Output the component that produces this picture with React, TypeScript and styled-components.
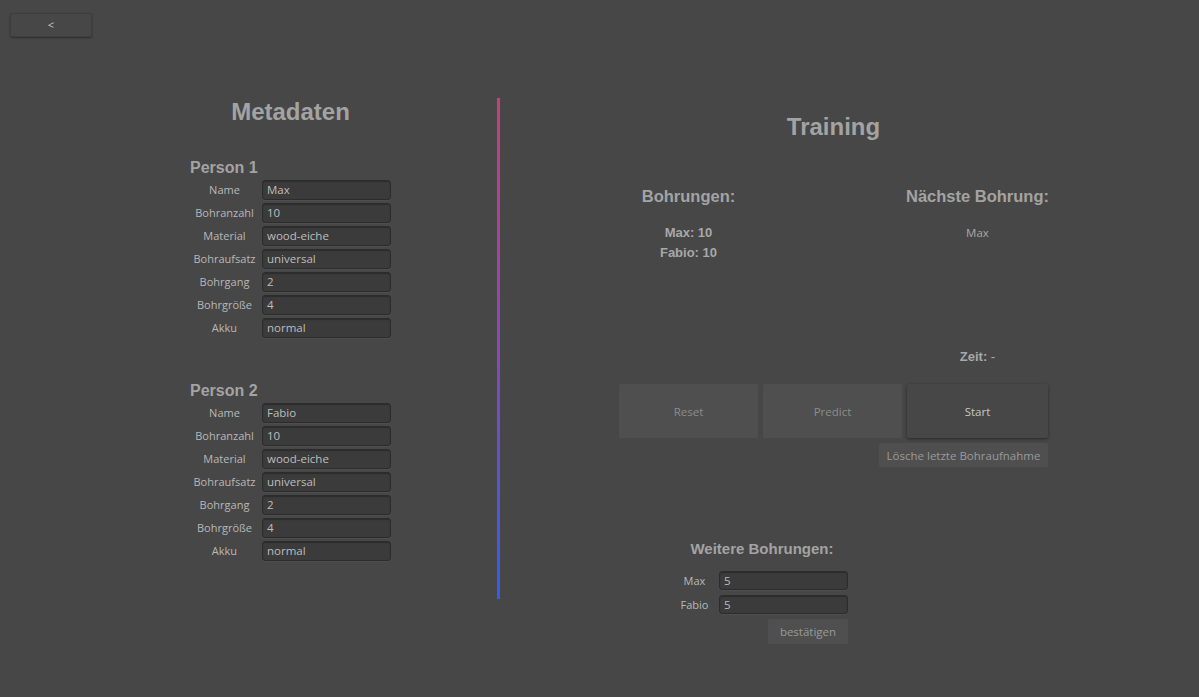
import React from "react";
import styled, { createGlobalStyle } from "styled-components";

const Global = createGlobalStyle`
  html, body { margin: 0; padding: 0; background: #474747; }
  body { font-family: "Open Sans", "Noto Sans", sans-serif; }
`;

const Page = styled.div`
  width: 1199px;
  height: 697px;
  background: #474747;
  position: relative;
  overflow: hidden;
`;

const TopBar = styled.div`
  padding: 12px 0 0 10px;
  height: 24px;
`;

const BackButton = styled.button`
  width: 82px;
  height: 24px;
  background: #474747;
  border: 1px solid #3e3e3e;
  border-radius: 2px;
  box-shadow: 0 1px 2px rgba(0, 0, 0, 0.35);
  color: #c8c8c8;
  font-family: "Open Sans", sans-serif;
  font-size: 11px;
  padding: 0;
`;

const Main = styled.div`
  display: flex;
  margin-top: 62px;
`;

const LeftCol = styled.div`
  margin-left: 190px;
  width: 201px;
  display: flex;
  flex-direction: column;
`;

const Title = styled.h1<{ $top?: number }>`
  margin: ${(p) => p.$top ?? 0}px 0 0 0;
  font-family: "Liberation Sans", Arial, sans-serif;
  font-weight: bold;
  font-size: 24px;
  line-height: 26px;
  color: #a3a3a3;
  text-align: center;
  white-space: nowrap;
`;

const SubTitle = styled.h2<{ $top: number }>`
  margin: ${(p) => p.$top}px 0 0 0;
  font-family: "Liberation Sans", Arial, sans-serif;
  font-weight: bold;
  font-size: 16px;
  line-height: 20px;
  color: #a3a3a3;
  white-space: nowrap;
`;

const Form = styled.div`
  display: grid;
  grid-template-columns: 69px 129px;
  column-gap: 3px;
  row-gap: 3px;
  margin-top: 2px;
`;

const Label = styled.label`
  font-size: 11px;
  line-height: 20px;
  color: #b8b8b8;
  text-align: center;
  white-space: nowrap;
`;

const Input = styled.input<{ $h?: number }>`
  box-sizing: border-box;
  width: 100%;
  height: ${(p) => p.$h ?? 20}px;
  background: #3b3b3b;
  border: 1px solid #2c2c2c;
  border-radius: 3px;
  box-shadow: inset 0 1px 1px rgba(0, 0, 0, 0.25), 0 1px 0 rgba(255, 255, 255, 0.04);
  color: #bdbdbd;
  font-family: "Open Sans", sans-serif;
  font-size: 11.5px;
  line-height: 14px;
  padding: 0 4px 1px;
  outline: none;
`;

const Divider = styled.div`
  margin-left: 106px;
  width: 3px;
  height: 501px;
  background: linear-gradient(to bottom, #c83f78 0%, #8a48b8 50%, #2f5ef2 100%);
`;

const RightCol = styled.div`
  margin-left: 119px;
  width: 429px;
  display: flex;
  flex-direction: column;
`;

const ThreeGrid = styled.div<{ $top: number }>`
  display: grid;
  grid-template-columns: 139px 139px 141px;
  column-gap: 5px;
  margin-top: ${(p) => p.$top}px;
`;

const Cell = styled.div<{ $col: number }>`
  grid-column: ${(p) => p.$col};
  display: flex;
  flex-direction: column;
  align-items: center;
`;

const SectionHead = styled.div<{ $size?: number }>`
  font-family: "Liberation Sans", Arial, sans-serif;
  font-weight: bold;
  font-size: ${(p) => p.$size ?? 16.5}px;
  line-height: 20px;
  color: #a3a3a3;
  text-align: center;
  white-space: nowrap;
`;

const StatList = styled.div`
  margin-top: 17px;
  display: flex;
  flex-direction: column;
  align-items: center;
`;

const Stat = styled.div<{ $bold?: boolean }>`
  font-family: ${(p) => (p.$bold ? `"Liberation Sans", Arial, sans-serif` : `"Open Sans", sans-serif`)};
  font-weight: ${(p) => (p.$bold ? "bold" : "normal")};
  font-size: ${(p) => (p.$bold ? 13 : 11.5)}px;
  line-height: 20px;
  color: #a8a8a8;
  white-space: nowrap;
`;

const Zeit = styled.div`
  font-family: "Liberation Sans", Arial, sans-serif;
  font-size: 13px;
  line-height: 20px;
  color: #a8a8a8;
  white-space: nowrap;
  b { font-weight: bold; }
`;

const BigButton = styled.button<{ $active?: boolean }>`
  height: 54px;
  border: none;
  border-radius: 2px;
  background: ${(p) => (p.$active ? "#474747" : "#4f4f4f")};
  box-shadow: ${(p) => (p.$active ? "0 1px 3px rgba(0,0,0,0.45)" : "none")};
  color: ${(p) => (p.$active ? "#c8c8c8" : "#8c8c8c")};
  font-family: "Open Sans", sans-serif;
  font-size: 11.5px;
`;

const ButtonRow = styled.div`
  display: grid;
  grid-template-columns: 139px 139px 141px;
  column-gap: 5px;
  margin-top: 17px;
`;

const SmallButton = styled.button<{ $w: number; $h: number }>`
  width: ${(p) => p.$w}px;
  height: ${(p) => p.$h}px;
  border: none;
  border-radius: 2px;
  background: #4f4f4f;
  color: #9a9a9a;
  font-family: "Open Sans", sans-serif;
  font-size: 11.5px;
  padding: 0;
  white-space: nowrap;
`;

const RightAlign = styled.div<{ $top: number }>`
  display: flex;
  justify-content: flex-end;
  margin-top: ${(p) => p.$top}px;
`;

const MoreBlock = styled.div`
  margin-top: 72px;
  margin-left: 57px;
  width: 172px;
  display: flex;
  flex-direction: column;
  align-items: stretch;
`;

const MoreForm = styled.div`
  display: grid;
  grid-template-columns: 37px 129px;
  column-gap: 6px;
  row-gap: 4px;
  margin-top: 12px;
`;

const people = [
  { name: "Max", top: 33 },
  { name: "Fabio", top: 43 },
];

const fields = (name: string) => [
  ["Name", name],
  ["Bohranzahl", "10"],
  ["Material", "wood-eiche"],
  ["Bohraufsatz", "universal"],
  ["Bohrgang", "2"],
  ["Bohrgröße", "4"],
  ["Akku", "normal"],
];

export default function App() {
  return (
    <Page>
      <Global />
      <TopBar>
        <BackButton>&lt;</BackButton>
      </TopBar>
      <Main>
        <LeftCol>
          <Title $top={1}>Metadaten</Title>
          {people.map((p, i) => (
            <React.Fragment key={p.name}>
              <SubTitle $top={p.top}>Person {i + 1}</SubTitle>
              <Form>
                {fields(p.name).map(([l, v]) => (
                  <React.Fragment key={l}>
                    <Label>{l}</Label>
                    <Input defaultValue={v} />
                  </React.Fragment>
                ))}
              </Form>
            </React.Fragment>
          ))}
        </LeftCol>
        <Divider />
        <RightCol>
          <Title $top={16}>Training</Title>
          <ThreeGrid $top={46}>
            <Cell $col={1}>
              <SectionHead>Bohrungen:</SectionHead>
              <StatList>
                <Stat $bold>Max: 10</Stat>
                <Stat $bold>Fabio: 10</Stat>
              </StatList>
            </Cell>
            <Cell $col={3}>
              <SectionHead>Nächste Bohrung:</SectionHead>
              <StatList>
                <Stat>Max</Stat>
              </StatList>
            </Cell>
          </ThreeGrid>
          <ThreeGrid $top={84}>
            <Cell $col={3}>
              <Zeit>
                <b>Zeit:</b> -
              </Zeit>
            </Cell>
          </ThreeGrid>
          <ButtonRow>
            <BigButton>Reset</BigButton>
            <BigButton>Predict</BigButton>
            <BigButton $active>Start</BigButton>
          </ButtonRow>
          <RightAlign $top={5}>
            <SmallButton $w={169} $h={24}>Lösche letzte Bohraufnahme</SmallButton>
          </RightAlign>
          <MoreBlock>
            <SectionHead $size={15}>Weitere Bohrungen:</SectionHead>
            <MoreForm>
              <Label>Max</Label>
              <Input $h={19} defaultValue="5" />
              <Label>Fabio</Label>
              <Input $h={19} defaultValue="5" />
            </MoreForm>
            <RightAlign $top={4}>
              <SmallButton $w={80} $h={25}>bestätigen</SmallButton>
            </RightAlign>
          </MoreBlock>
        </RightCol>
      </Main>
    </Page>
  );
}
